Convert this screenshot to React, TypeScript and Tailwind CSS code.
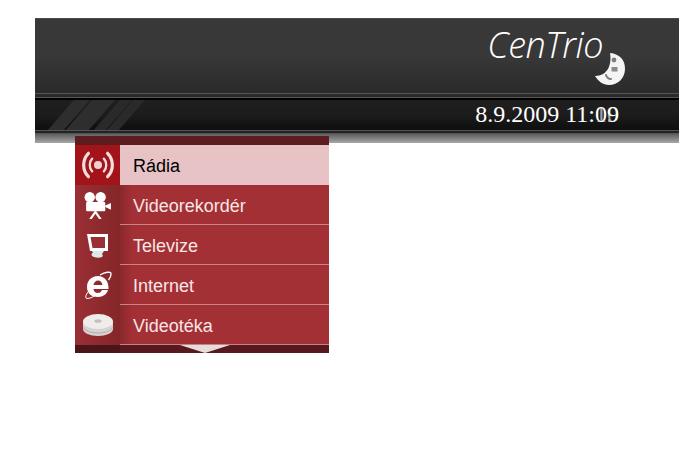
const RadioIcon = () => (
  <svg width="34" height="30" viewBox="0 0 32 28" fill="none" stroke="#f3dcdc" strokeWidth="3" strokeLinecap="round">
    <path d="M7 3 C1 9 1 19 7 25" />
    <path d="M25 3 C31 9 31 19 25 25" />
    <path d="M10.5 8 C7.5 11 7.5 17 10.5 20" strokeWidth="2.2" />
    <path d="M21.5 8 C24.5 11 24.5 17 21.5 20" strokeWidth="2.2" />
    <circle cx="16" cy="14" r="3.8" fill="#ecd0d2" stroke="none" />
  </svg>
);

const CameraIcon = () => (
  <svg width="29" height="29" viewBox="0 0 28 28" fill="#fff">
    <circle cx="6.5" cy="6" r="5" />
    <circle cx="17" cy="6" r="5" />
    <rect x="3" y="10.5" width="18.5" height="9" rx="1" />
    <path d="M21.5 14 L27 11.5 V18 L21.5 15.5Z" />
    <path d="M11.5 19 L6 27 H8.5 L12 22 L15.5 27 H18 L12.5 19Z" />
  </svg>
);

const MonitorIcon = () => (
  <svg width="22" height="24" viewBox="0 0 22 24" fill="none" className="mt-[2px] ml-[1px]">
    <path d="M0 0 H21 V17 H3 Z" fill="#fff" />
    <path d="M3.5 3 H18 V14 H5.5 Z" fill="#9a2f35" />
    <path d="M5 17 H17 L15 20 C16 21 16 22 15 23 C12 24 8 24 5 22 C4 20 5 19 6 19 Z" fill="#dfe8e8" />
  </svg>
);

const BrowserIcon = () => (
  <svg width="30" height="30" viewBox="0 0 30 30" fill="none">
    <path d="M15 6 C8 6 4 11 4 17 C4 24 9 27 15 27 C20 27 24 24 25 20 H19 C18 22 17 23 15 23 C12 23 10.5 21 10.5 19 H25.5 C26 11 21 6 15 6Z M10.5 15 C11 12 13 10.5 15 10.5 C17.5 10.5 19 12.5 19.5 15Z" fill="#fff" fillRule="evenodd" />
    <path d="M5 22 C2 26 2 29 5 28.5 C9 28 13 25 16 23" stroke="#fff" strokeWidth="1" />
    <path d="M17 5 C22 2 28 1 28 4 C28 6 27 8 25.5 10" stroke="#fff" strokeWidth="1.4" />
  </svg>
);

const DiscIcon = () => (
  <svg width="32" height="24" viewBox="0 0 32 24">
    <path d="M1 9 V16 C1 20 8 23 16 23 C24 23 31 20 31 16 V9Z" fill="#d8d3d3" />
    <path d="M1 14 C3 18 9 20 16 20 C23 20 29 18 31 14" fill="none" stroke="#b3adad" strokeWidth="1" />
    <ellipse cx="16" cy="8.5" rx="15" ry="7.5" fill="#f0ecec" />
    <ellipse cx="16" cy="8" rx="3.6" ry="1.8" fill="#c4bebe" />
  </svg>
);

const Moon = () => (
  <svg width="32" height="34" viewBox="0 0 32 34" className="-ml-[9px] mt-[31px] shrink-0">
    <path d="M16 1 C26 2 31 8 31 17 C31 26 24 33 15 33 C9 33 4 29 1 24 C14 24 18 12 16 1Z" fill="#f4f4f4" />
    <circle cx="20" cy="8" r="2.4" fill="#7d7d7d" />
    <rect x="17.5" y="15" width="6" height="4.5" fill="#8a8a8a" />
    <path d="M12 23 C13 26 15 27 17 27" fill="none" stroke="#7d7d7d" strokeWidth="2" strokeLinecap="round" />
  </svg>
);

const items = [
  { label: "Rádia", icon: <RadioIcon />, active: true },
  { label: "Videorekordér", icon: <CameraIcon /> },
  { label: "Televize", icon: <MonitorIcon /> },
  { label: "Internet", icon: <BrowserIcon /> },
  { label: "Videotéka", icon: <DiscIcon /> },
];

export default function App() {
  return (
    <div className="h-[462px] w-[679px] overflow-hidden bg-white pt-[18px] pl-[35px]">
      <header className="flex h-[125px] flex-col">
        {/* upper panel with the logo */}
        <div className="flex h-[75px] justify-end border-t border-[#4a4a4a] bg-gradient-to-b from-[#383838] via-[#383838] to-[#2a2a2a] pr-[53px]">
          <div className="flex items-start pt-[2px] font-['Open_Sans',sans-serif] text-[36px] leading-[48px] font-light tracking-[-0.5px] text-white italic">
            CenTrio
            <Moon />
          </div>
        </div>
        <div className="h-[5px] border-y border-[#555] bg-[#2a2a2a]" />
        {/* dark strip with the clock */}
        <div className="relative flex h-[32px] justify-end overflow-hidden border-t-2 border-black bg-gradient-to-b from-[#1f1f1f] via-[#1c1c1c] to-[#0e0e0e] pr-[60px]">
          <div className="absolute top-0 left-[25px] h-[32px] w-[16px] -skew-x-[41deg] bg-[#2e2e2e]" />
          <div className="absolute top-0 left-[43px] h-[32px] w-[23px] -skew-x-[41deg] bg-[#2e2e2e]" />
          <div className="absolute top-0 left-[71px] h-[32px] w-[12px] -skew-x-[41deg] bg-[#2a2a2a]" />
          <div className="absolute top-0 left-[84px] h-[32px] w-[12px] -skew-x-[41deg] bg-[#2a2a2a]" />
          <div className="relative font-['Liberation_Serif',serif] text-[24px] leading-[28px] text-white">
            8.9.2009 11:09
            <span className="absolute top-0 right-0 opacity-60">10</span>
          </div>
        </div>
        <div className="h-[4px] border-y border-[#555] bg-[#222]" />
        <div className="flex-1 bg-gradient-to-b from-[#5e5e5e] to-[#a8a8a8]" />
      </header>

      {/* menu */}
      <nav className="relative -mt-[7px] ml-[40px] w-[254px] font-['Liberation_Sans',sans-serif] text-[18px]">
        <div className="h-[9px] bg-[#5c1c20]" />
        {items.map((item) => (
          <div key={item.label} className="flex h-[40px]">
            <div
              className={
                item.active
                  ? "flex w-[45px] items-center justify-center bg-[#a21419]"
                  : "flex w-[45px] items-center justify-center bg-gradient-to-r from-[#9b2f35] to-[#842629]"
              }
            >
              {item.icon}
            </div>
            <div
              className={
                item.active
                  ? "flex flex-1 items-center bg-[#e8c3c6] pt-[2px] pl-[13px] text-black"
                  : "flex flex-1 items-center border-b border-[#c98387] bg-gradient-to-r from-[#8a282d] to-[#a33035] to-[6%] pt-[4px] pl-[13px] text-[#f8e6e6]"
              }
            >
              {item.label}
            </div>
          </div>
        ))}
        <div className="relative flex h-[8px] bg-[#57191e]">
          <div className="w-[45px] bg-[#4a1519]" />
          <div className="absolute top-0 left-[105px] h-0 w-0 border-x-[25px] border-t-[8px] border-x-transparent border-t-[#e6dcdc]" />
        </div>
      </nav>
    </div>
  );
}
